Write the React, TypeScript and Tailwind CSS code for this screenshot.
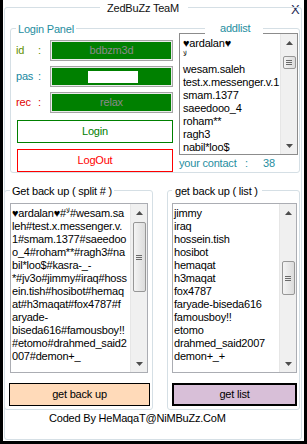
import React from "react";

function UpArrow() {
  return (
    <svg width="7" height="4" viewBox="0 0 7 4">
      <path d="M0 4 L3.5 0 L7 4 Z" fill="#4d4d4d" />
    </svg>
  );
}
function DownArrow() {
  return (
    <svg width="7" height="4" viewBox="0 0 7 4">
      <path d="M0 0 L3.5 4 L7 0 Z" fill="#4d4d4d" />
    </svg>
  );
}

function ScrollBar({ gap, thumb }: { gap: string; thumb: string }) {
  return (
    <div className="w-[17px] h-full bg-[#f0f0f0] border-l border-[#e6e6e6] flex flex-col items-center">
      <div className="h-[17px] w-full flex items-center justify-center shrink-0">
        <UpArrow />
      </div>
      <div className={gap + " shrink-0"} />
      <div
        className={
          thumb +
          " w-[13px] shrink-0 rounded-[2px] border border-[#979797] bg-gradient-to-r from-[#f4f4f4] to-[#dcdcdc] flex flex-col items-center justify-center gap-[1px]"
        }
      >
        <div className="w-[6px] h-[1px] bg-[#6a6a6a]" />
        <div className="w-[6px] h-[1px] bg-[#6a6a6a]" />
        <div className="w-[6px] h-[1px] bg-[#6a6a6a]" />
      </div>
      <div className="flex-1" />
      <div className="h-[17px] w-full flex items-center justify-center shrink-0">
        <DownArrow />
      </div>
    </div>
  );
}

const listItems: React.ReactNode[] = [
  "♥ardalan♥",
  <span className="text-[7px] leading-[7px] align-top">ﻻ</span>,
  "wesam.saleh",
  "test.x.messenger.v.1",
  "smam.1377",
  "saeedooo_4",
  "roham**",
  "ragh3",
  "nabil*loo$",
];

const splitLines: React.ReactNode[] = [
  <>
    ♥ardalan♥#<span className="text-[7px] leading-[7px] align-top">ﻻ</span>#wesam.sa
  </>,
  "leh#test.x.messenger.v.",
  "1#smam.1377#saeedoo",
  "o_4#roham**#ragh3#na",
  "bil*loo$#kasra-_-",
  "*#jv3o#jimmy#iraq#hoss",
  "ein.tish#hosibot#hemaq",
  "at#h3maqat#fox4787#f",
  "aryade-",
  "biseda616#famousboy!!",
  "#etomo#drahmed_said2",
  "007#demon+_",
];

const listLines = [
  "jimmy",
  "iraq",
  "hossein.tish",
  "hosibot",
  "hemaqat",
  "h3maqat",
  "fox4787",
  "faryade-biseda616",
  "famousboy!!",
  "etomo",
  "drahmed_said2007",
  "demon+_+",
];

function GreenBox({ children }: { children?: React.ReactNode }) {
  return (
    <div className="w-[123px] h-[21px] border border-[#a5a5a5] bg-[#ececec] p-[1px]">
      <div className="w-full h-full bg-[#008000] flex items-center justify-center text-[#8a8a8a]">
        {children}
      </div>
    </div>
  );
}

export default function App() {
  return (
    <div className="w-[307px] h-[444px] bg-black flex font-['Liberation_Sans','DejaVu_Sans',sans-serif] text-[11px] leading-[13px] tracking-[-0.2px] text-black">
      <div className="relative ml-[3px] w-[301px] h-[441px] bg-white pt-[7px] pl-[1px]">
        <span className="absolute left-[286px] top-[2px] bg-white px-[2px] text-[13px] leading-[15px] text-[#1e2a55]">
          X
        </span>
        <div className="relative w-[298px] h-[433px] border border-[#d5dfe5] rounded-[3px]">
          <span className="absolute left-[95px] -top-[6px] bg-white pl-[7px] pr-[9px] text-[11px] leading-[13px] text-[#111]">
            ZedBuZz TeaM
          </span>

          {/* Login Panel */}
          <div className="relative ml-[5px] mt-[20px] w-[290px] h-[145px] border border-[#d5dfe5] rounded-[3px] flex">
            <span className="absolute left-[5px] -top-[6px] bg-white px-[2px] text-[#1f8ea0]">
              Login Panel
            </span>
            <span className="absolute left-[194px] -top-[7px] bg-white pl-[15px] pr-[13px] text-[#1f8ea0]">
              addlist
            </span>

            <div className="w-[162px] flex flex-col pt-[11px]">
              <div className="flex items-center pl-[5px]">
                <span className="w-[22px] text-[#5f8f00]">id</span>
                <span className="w-[12px] text-[#5f8f00]">:</span>
                <GreenBox>bdbzm3d</GreenBox>
              </div>
              <div className="flex items-center pl-[5px] mt-[5px]">
                <span className="w-[22px] text-[#18879f]">pas</span>
                <span className="w-[12px] text-[#18879f]">:</span>
                <GreenBox>
                  <div className="w-[50px] h-[12px] bg-white ml-[3px]" />
                </GreenBox>
              </div>
              <div className="flex items-center pl-[5px] mt-[5px]">
                <span className="w-[22px] text-[#e00000]">rec</span>
                <span className="w-[12px] text-[#e00000]">:</span>
                <GreenBox>relax</GreenBox>
              </div>
              <div className="ml-[6px] mt-[7px] w-[156px] h-[23px] border border-[#008000] bg-white flex items-center justify-center text-[#008000]">
                Login
              </div>
              <div className="ml-[6px] mt-[6px] w-[156px] h-[23px] border border-[#ff0000] bg-white flex items-center justify-center text-[#ff0000]">
                LogOut
              </div>
            </div>

            <div className="ml-[6px] pt-[4px] flex flex-col">
              <div className="w-[119px] h-[122px] border border-[#8c8c8c] flex">
                <div className="flex-1 overflow-hidden pl-[3px] pt-[3px]">
                  {listItems.map((t, i) => (
                    <div key={i} className="h-[13px] whitespace-nowrap">
                      {t}
                    </div>
                  ))}
                </div>
                <ScrollBar gap="h-[5px]" thumb="h-[13px]" />
              </div>
              <div className="mt-[2px] flex text-[#1f8ea0]">
                <span className="w-[66px] whitespace-nowrap">your contact</span>
                <span className="w-[18px]">:</span>
                <span>38</span>
              </div>
            </div>
          </div>

          {/* Bottom groups */}
          <div className="flex mt-[17px]">
            <div className="relative -ml-[1px] w-[149px] h-[220px] border border-[#d5dfe5] rounded-[3px] flex flex-col">
              <span className="absolute left-[5px] -top-[6px] bg-white px-[2px] whitespace-nowrap">
                Get back up ( split # )
              </span>
              <div className="ml-[5px] mt-[12px] w-[138px] h-[170px] border border-[#abadb3] flex">
                <div className="flex-1 overflow-hidden pl-[1px] pt-[3px]">
                  {splitLines.map((t, i) => (
                    <div key={i} className="h-[13px] whitespace-nowrap">
                      {t}
                    </div>
                  ))}
                </div>
                <ScrollBar gap="h-[1px]" thumb="h-[70px]" />
              </div>
              <div className="ml-[4px] mt-[10px] w-[141px] h-[23px] border border-black bg-[#ffdab9] flex items-center justify-center">
                get back up
              </div>
            </div>

            <div className="relative ml-[14px] w-[133px] h-[220px] border border-[#d5dfe5] rounded-[3px] flex flex-col">
              <span className="absolute left-[4px] -top-[6px] bg-white pl-[3px] pr-[4px] whitespace-nowrap">
                get back up ( list )
              </span>
              <div className="ml-[4px] mt-[12px] w-[125px] h-[170px] border border-[#abadb3] flex">
                <div className="flex-1 overflow-hidden pl-[1px] pt-[3px]">
                  {listLines.map((t, i) => (
                    <div key={i} className="h-[13px] whitespace-nowrap">
                      {t}
                    </div>
                  ))}
                </div>
                <ScrollBar gap="h-[40px]" thumb="h-[34px]" />
              </div>
              <div className="ml-[4px] mt-[10px] w-[125px] h-[23px] border-2 border-black bg-[#d8bfd8] flex items-center justify-center">
                get list
              </div>
            </div>
          </div>

          <div className="mt-[2px] ml-[44px] whitespace-nowrap">Coded By HeMaqaT@NiMBuZz.CoM</div>
        </div>
      </div>
    </div>
  );
}
